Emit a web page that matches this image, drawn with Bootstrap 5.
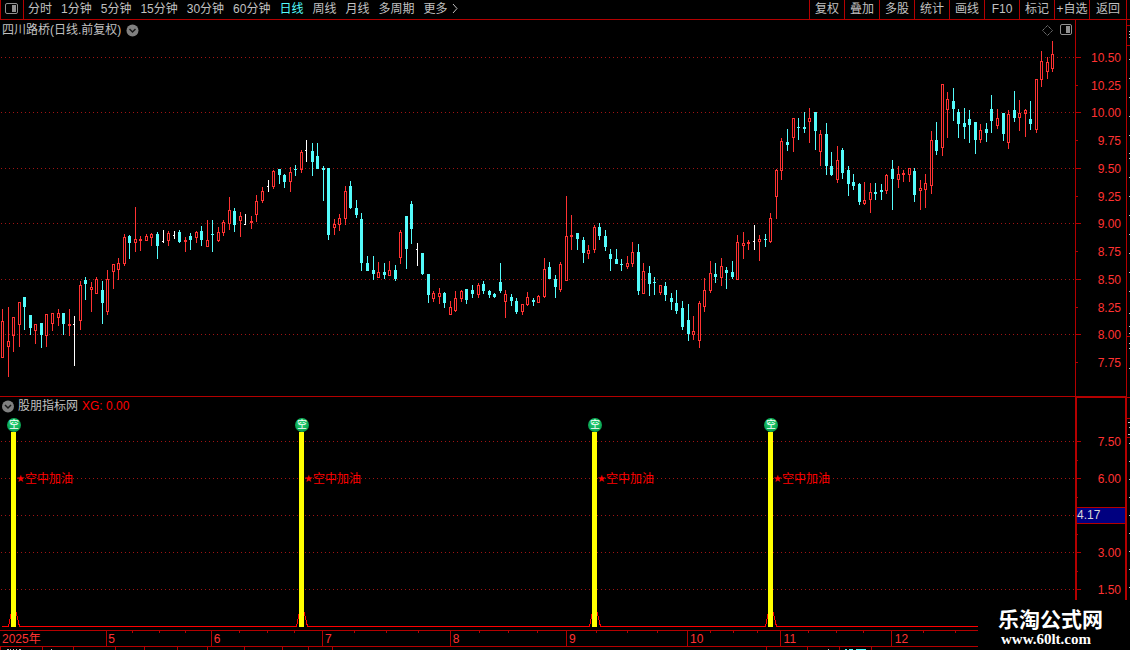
<!DOCTYPE html>
<html lang="zh-CN">
<head>
<meta charset="utf-8">
<meta name="viewport" content="width=device-width, initial-scale=1">
<title>四川路桥 日线</title>
<link href="https://cdn.jsdelivr.net/npm/bootstrap@5.3.0/dist/css/bootstrap.min.css" rel="stylesheet">
<style>
:root{--line:#b40000;--txt:#c0c0c0;--up:#ff3232;--down:#54fcfc}
body{background:#000;color:var(--txt);font:12px/16px "Liberation Sans","Noto Sans CJK SC",sans-serif}
.topbar{flex:0 0 20px;height:20px;border-bottom:1px solid var(--line);white-space:nowrap}
.topbar a,.topbar button{color:var(--txt);font-size:12px;line-height:19px;text-decoration:none}
.topbar a.active{color:var(--down)}
.side-toggle{width:24px;border:solid var(--line);border-width:0 1px;background:none;padding:0}
.periods{gap:9px;padding-left:4px}
.tool{width:35px;border:0;border-left:1px solid var(--line);background:none;padding:0}
.tools{border-right:1px solid var(--line);margin-right:3px}
.tool-last{width:37px}
.panel-price{flex:376 1 0;min-height:0}
.panel-signal{flex:234 1 0;min-height:0}
.plot{min-width:0}
.panel-signal .plot{border-top:1px solid var(--line)}
.fill-svg{position:absolute;inset:0;width:100%;height:100%;shape-rendering:crispEdges}
.caption{padding:2px 3px 0 2px;gap:5px}
.panel-signal .caption{padding-top:1px}
.caption svg,.scale svg,.topbar svg{display:block;flex:none}
.scale{width:52px;border:solid var(--line);border-width:0 1px;color:var(--up)}
.panel-signal .scale{border-width:2px 2px 0}
.scale::before,.scale::after{content:"";flex:24 1 0}
.scale::after{flex-grow:19}
.scale ol{flex:333 1 0;padding:0 5px 0 0}
.scale li{flex:1 1 0;min-height:0;text-align:right}
.panel-signal .scale::before{flex-grow:25}
.panel-signal .scale::after{flex-grow:22}
.panel-signal .scale ol{flex-grow:185;padding:0}
.panel-signal .scale li{padding-right:4px}
.panel-signal .scale li.cursor-value{padding:0}
.cursor-value span{background:#000080;border:solid var(--line);border-width:1px 0;color:#d8d8d8;line-height:15px;text-align:left}
.edge{width:3px}
.xg{color:#f00}
.marker{position:absolute;width:0}
.ball{width:14px;height:14px;margin-left:-7px;border-radius:50%;background:radial-gradient(circle at 50% 40%,#28d878,#08a050 70%,#087038);color:#fff;font-size:10px;line-height:14px}
.signal-name{color:#f00;white-space:nowrap;margin:39px 0 0 2px;line-height:16px}
.signal-name i{font:10px/16px "DejaVu Sans",sans-serif}
.dates{flex:0 0 20px;color:var(--up)}
.dates ol{height:16px}
.dates ol::after{content:"";flex:152 1 0}
.dates li{min-width:0;padding:1px 0 0 2px;line-height:16px}
.sitemark{position:absolute;right:0;bottom:0;width:152px;height:50px;background:#000;color:#fff;padding:6px 0 0 20px}
.sitemark strong{font:bold 21px/24px "Noto Sans CJK SC",sans-serif}
.sitemark a{color:#fff;text-decoration:none;font:bold 15px/18px "Liberation Serif",serif;padding-left:3px}
</style>
</head>
<body class="position-relative d-flex flex-column vh-100 overflow-hidden">

<header class="topbar d-flex">
  <button class="side-toggle" type="button" aria-label="侧栏">
    <svg width="22" height="19" fill="none" stroke="#909090"><rect x="4.500" y="3.500" width="12" height="10" rx="1.500"/><path d="M11 5h4v7h-4z" fill="#909090" stroke="none"/></svg>
  </button>
  <nav class="periods d-flex">
    <a href="#">分时</a><a href="#">1分钟</a><a href="#">5分钟</a><a href="#">15分钟</a><a href="#">30分钟</a><a href="#">60分钟</a><a href="#" class="active" aria-current="page">日线</a><a href="#">周线</a><a href="#">月线</a><a href="#">多周期</a>
    <a href="#" class="d-flex gap-1">更多<svg width="7" height="18" fill="none" stroke="#c0c0c0"><path d="M1 4l4 4.500l-4 4.500"/></svg></a>
  </nav>
  <div class="tools d-flex ms-auto">
    <button class="tool" type="button">复权</button><button class="tool" type="button">叠加</button><button class="tool" type="button">多股</button><button class="tool" type="button">统计</button><button class="tool" type="button">画线</button><button class="tool" type="button">F10</button><button class="tool" type="button">标记</button><button class="tool" type="button">+自选</button><button class="tool tool-last" type="button">返回</button>
  </div>
</header>

<section class="panel-price d-flex">
  <div class="plot position-relative flex-grow-1">
    <svg id="price" class="fill-svg" viewBox="0 20 1075 376" preserveAspectRatio="none"></svg>
    <div class="caption position-relative d-flex align-items-center">
      <span>四川路桥(日线.前复权)</span>
      <svg width="13" height="13"><circle cx="6.500" cy="6.500" r="6" fill="#808080"/><path d="M3.500 5l3 3l3-3" fill="none" stroke="#181818" stroke-width="1.500"/></svg>
      <svg class="ms-auto" width="11" height="11"><path d="M5.500.5l5 5l-5 5l-5-5z" fill="none" stroke="#808080" stroke-dasharray="1.400 .6"/></svg>
      <svg width="14" height="12"><rect x="2.500" y=".5" width="11" height="10" rx="1.500" fill="none" stroke="#909090"/><path d="M8 2h4v7h-4z" fill="#909090"/></svg>
    </div>
  </div>
  <div class="scale position-relative d-flex flex-column">
    <svg class="fill-svg" viewBox="0 20 50 376" preserveAspectRatio="none"><path stroke="#b40000" d="M0 57.500h5M0 112.500h5M0 168.500h5M0 223.500h5M0 279.500h5M0 334.500h5M0 85.500h2M0 140.500h2M0 196.500h2M0 251.500h2M0 307.500h2M0 362.500h2"/></svg>
    <ol class="list-unstyled d-flex flex-column m-0 position-relative">
      <li class="d-flex align-items-center justify-content-end">10.50</li><li class="d-flex align-items-center justify-content-end">10.25</li><li class="d-flex align-items-center justify-content-end">10.00</li><li class="d-flex align-items-center justify-content-end">9.75</li><li class="d-flex align-items-center justify-content-end">9.50</li><li class="d-flex align-items-center justify-content-end">9.25</li><li class="d-flex align-items-center justify-content-end">9.00</li><li class="d-flex align-items-center justify-content-end">8.75</li><li class="d-flex align-items-center justify-content-end">8.50</li><li class="d-flex align-items-center justify-content-end">8.25</li><li class="d-flex align-items-center justify-content-end">8.00</li><li class="d-flex align-items-center justify-content-end">7.75</li>
    </ol>
  </div>
  <div class="edge position-relative"><svg class="fill-svg" viewBox="0 20 3 376" preserveAspectRatio="none"><path stroke="#b40000" d="M0 25.500h3M0 45.500h3M0 336.500h3"/><path stroke="#c0c0c0" d="M2 31.500h1M2 34.500h1M2 37.500h1M2 59.500h1M2 78.500h1M2 97.500h1M2 116.500h1M2 135.500h1M2 153.500h1M2 158.500h1M2 177.500h1M2 196.500h1M2 215.500h1M2 234.500h1M2 253.500h1M2 272.500h1M2 291.500h1M2 313.500h1M2 326.500h1M2 333.500h1M2 343.500h1M2 348.500h1M2 368.500h1"/></svg></div>
</section>

<section class="panel-signal d-flex">
  <div class="plot position-relative flex-grow-1">
    <svg id="signal" class="fill-svg" viewBox="0 397 1075 233" preserveAspectRatio="none"></svg>
    <div class="caption position-relative d-flex align-items-center gap-1">
      <svg width="12" height="13"><circle cx="6" cy="6.500" r="6" fill="#808080"/><path d="M3 5l3 3l3-3" fill="none" stroke="#181818" stroke-width="1.500"/></svg>
      <span>股朋指标网</span><span class="xg">XG: 0.00</span>
    </div>
    <div id="markers"></div>
  </div>
  <div class="scale position-relative d-flex flex-column">
    <svg class="fill-svg" viewBox="0 398 48 232" preserveAspectRatio="none"><path stroke="#b40000" d="M0 441.500h4M0 478.500h4M0 552.500h4M0 589.500h4M0 460.500h1M0 497.500h1M0 534.500h1M0 571.500h1"/></svg>
    <ol class="list-unstyled d-flex flex-column m-0 position-relative">
      <li class="d-flex align-items-center justify-content-end">7.50</li><li class="d-flex align-items-center justify-content-end">6.00</li><li class="cursor-value d-flex align-items-center"><span class="w-100">4.17</span></li><li class="d-flex align-items-center justify-content-end">3.00</li><li class="d-flex align-items-center justify-content-end">1.50</li>
    </ol>
  </div>
  <div class="edge position-relative"><svg class="fill-svg" viewBox="0 396 3 234" preserveAspectRatio="none"><path stroke="#b40000" d="M0 397.500h3M0 418.500h3M0 437.500h3"/><path stroke="#c0c0c0" d="M1 422.500h2M2 427.500h1M1 434.500h2M2 443.500h1M2 461.500h1M2 479.500h1M2 497.500h1M2 515.500h1M2 533.500h1M2 551.500h1M2 569.500h1M2 587.500h1"/></svg></div>
</section>

<footer class="dates position-relative">
  <svg class="fill-svg" viewBox="0 630 1130 20" preserveAspectRatio="none">
    <path stroke="#b40000" d="M0 630.500H1130M0 646.500H1130M106.500 631v15M211.500 631v15M322.500 631v15M450.500 631v15M566.500 631v15M687.500 631v15M780.500 631v15M891.500 631v15M132.500 631v2M159.500 631v2M185.500 631v2M239.500 631v2M267.500 631v2M294.500 631v2M354.500 631v2M386.500 631v2M418.500 631v2M479.500 631v2M508.500 631v2M537.500 631v2M596.500 631v2M627.500 631v2M657.500 631v2M710.500 631v2M733.500 631v2M757.500 631v2M808.500 631v2M836.500 631v2M863.500 631v2M923.500 631v2M955.500 631v2M.5 647v3M42.500 647v3M73.500 647v3M115.500 647v3M144.500 647v3M177.500 647v3M207.500 647v3M244.500 647v3M282.500 647v3M308.500 647v3M332.500 647v3M766.500 647v3M807.500 647v3M839.500 647v3M871.500 647v3"/>
    <path stroke="#c0c0c0" d="M7 649.500h2M10 649.500h1M13 649.500h1M16 649.500h1M19 649.500h2M51 649.500h1M828 649.500h1"/>
    <path stroke="#54fcfc" d="M845 649.500h2M849 649.500h4M856 649.500h10"/>
  </svg>
  <ol id="months" class="list-unstyled d-flex position-relative m-0"></ol>
</footer>

<aside class="sitemark d-flex flex-column">
  <strong>乐淘公式网</strong><a href="#">www.60lt.com</a>
</aside>

<script src="https://cdn.jsdelivr.net/npm/bootstrap@5.3.0/dist/js/bootstrap.bundle.min.js"></script>
<script>
// Each candle: x high bodyTop bodyBottom low kind (r rising, c falling, w unchanged)
const candles = `2 309 321 358 358 r;8 307 341 347 377 r;13 317 317 336 352 r;19 302 302 325 347 r;24 297 297 307 330 c;30 315 315 328 335 c;35 324 324 331 344 r;41 323 323 335 348 c;46 314 314 336 347 r;52 313 313 324 331 r;58 309 313 318 326 r;63 313 313 324 335 c;69 309 324 326 336 r;74 316 324 325 366 w;80 281 285 321 330 r;85 277 280 284 300 c;91 282 287 290 312 r;96 277 279 294 294 r;102 281 290 303 324 c;107 270 279 312 315 r;
113 264 264 272 289 r;118 258 263 270 280 r;124 234 237 264 266 r;129 235 236 243 259 c;135 207 239 243 252 r;140 236 239 241 251 r;146 234 236 241 241 r;151 233 234 238 246 r;157 232 234 246 259 c;163 230 241 242 243 w;168 231 233 241 246 r;174 231 235 236 239 w;179 230 232 242 243 c;185 237 240 242 252 r;190 233 236 240 250 c;196 231 232 238 243 r;201 226 231 240 246 c;207 220 240 247 247 r;212 220 234 235 252 c;218 227 232 241 242 r;
223 220 222 233 236 r;229 197 210 224 230 r;234 208 211 225 232 c;240 212 216 221 237 r;245 214 224 225 225 w;251 216 221 223 229 r;256 195 201 215 222 r;262 187 191 201 203 r;268 180 186 187 192 w;273 170 171 187 189 r;279 169 169 175 184 c;284 174 175 182 188 c;290 167 172 182 192 r;295 165 169 170 176 c;301 150 152 170 173 r;306 140 150 151 162 w;312 143 151 162 176 c;317 143 156 169 169 c;323 166 168 170 201 c;328 168 168 235 240 c;
334 219 224 228 235 r;339 214 218 225 231 r;345 186 191 219 225 r;350 181 186 208 209 c;356 200 208 215 218 c;361 213 219 263 271 c;367 256 263 271 271 c;373 256 270 274 280 c;378 262 272 278 278 r;384 263 272 275 279 c;389 261 270 276 276 r;395 265 270 279 281 c;400 230 232 258 264 r;406 216 216 249 269 c;411 201 204 229 244 c;417 243 249 250 266 w;422 253 253 274 275 c;428 274 274 295 303 c;433 291 293 299 302 r;439 288 293 297 304 r;
444 292 293 303 308 c;450 301 307 315 315 r;455 291 298 311 312 r;461 290 291 299 302 r;466 289 289 300 304 c;472 285 290 294 298 c;478 283 285 295 298 r;483 281 284 291 294 c;489 290 291 295 298 c;494 293 294 297 298 c;500 263 282 291 293 c;505 290 294 302 318 r;511 294 297 301 306 c;516 298 301 312 314 c;522 304 304 312 315 r;527 292 297 305 306 r;533 298 300 302 306 c;538 295 296 303 303 r;544 258 269 297 298 r;549 262 267 279 279 c;
555 275 279 287 298 c;560 262 264 290 292 r;566 196 236 281 281 r;571 215 235 237 250 r;577 233 233 239 250 c;583 237 240 253 263 c;588 245 250 254 259 r;594 225 227 250 253 r;599 223 227 236 240 c;605 230 236 247 251 c;610 249 254 259 271 c;616 249 259 264 264 c;621 259 264 265 271 c;627 256 263 267 269 r;632 242 252 264 267 r;638 244 252 291 295 c;643 263 271 294 294 r;649 266 273 284 296 c;654 277 282 283 295 c;660 285 285 293 295 r;
665 282 286 295 301 c;671 293 298 302 310 c;676 290 303 311 314 c;682 301 308 327 330 c;688 304 320 334 341 c;693 316 331 335 340 r;699 301 303 341 348 r;704 278 290 307 312 r;710 261 273 291 293 r;715 263 274 277 283 c;721 258 266 278 286 r;726 267 270 273 289 c;732 261 272 277 279 c;737 235 242 280 280 r;743 232 243 246 259 r;748 240 242 244 250 r;754 225 241 242 250 w;759 235 239 242 261 r;765 234 239 240 247 c;770 213 218 242 243 r;
776 169 170 197 219 r;781 138 141 171 180 r;787 129 142 145 151 c;793 118 118 138 152 r;798 118 127 128 140 c;804 112 127 129 133 c;809 108 118 122 143 r;815 112 112 131 150 c;820 130 134 152 166 r;826 123 134 166 175 c;831 152 166 175 176 c;837 146 160 180 183 r;842 148 150 173 179 c;848 166 170 184 196 c;853 174 182 186 190 c;859 183 184 202 205 c;864 182 200 204 205 r;870 183 192 200 213 r;875 183 192 194 200 c;881 184 190 192 200 c;
886 174 175 191 194 r;892 160 169 179 210 c;898 166 174 180 188 r;903 170 173 175 182 r;909 168 168 175 182 r;914 168 171 195 202 c;920 180 188 191 210 r;925 174 183 190 208 r;931 131 140 186 194 r;936 122 140 151 155 c;942 84 84 148 156 r;947 92 99 110 138 r;953 88 101 109 121 c;958 109 112 124 138 c;964 108 123 127 139 c;969 110 119 125 143 c;975 122 122 140 154 c;980 124 130 140 143 r;986 123 129 133 142 c;991 95 109 121 133 c;
997 109 118 126 129 r;1003 113 113 134 141 c;1008 110 114 143 149 r;1014 91 110 118 122 c;1019 100 113 118 131 r;1025 109 110 114 137 r;1030 101 119 124 130 c;1036 79 79 130 133 r;1041 51 61 80 87 r;1047 57 62 72 79 r;1052 41 54 69 72 r`
  .split(';').map(s => s.trim().split(' '));

const grid = (ys) => `<path stroke="#a01414" stroke-dasharray="1 3" d="${ys.map(y => `M1 ${y + 0.5}H1075`).join('')}"/>`;
let up = '', wick = '', down = '', flat = '';
for (const [sx, sh, st, sb, sl, kind] of candles) {
  const [x, h, t, b, l] = [sx, sh, st, sb, sl].map(Number);
  if (kind === 'r') {
    wick += `M${x} ${h}h1V${t}h-1zM${x} ${b}h1V${l}h-1z`;
    up += `M${x - 0.5} ${t + 0.5}h2v${b - t - 1}h-2z`;
  } else if (kind === 'c') {
    down += `M${x} ${h}h1V${l}h-1zM${x - 1} ${t}h3V${b}h-3z`;
  } else {
    flat += `M${x} ${h}h1V${l}h-1zM${x - 1} ${t}h1v1h-1z`;
  }
}
document.getElementById('price').innerHTML = grid([57, 112, 168, 223, 279, 334]) +
  `<path fill="#ff3232" d="${wick}"/><path fill="none" stroke="#ff3232" d="${up}"/>` +
  `<path fill="#54fcfc" d="${down}"/><path fill="#fff" d="${flat}"/>`;

const signals = [13, 301, 594, 770];
document.getElementById('signal').innerHTML = grid([441, 478, 515, 552, 589]) +
  `<path fill="none" stroke="#f00" d="M2 626.5${signals.map(x => `H${x - 5}.5L${x - 1}.5 606H${x + 1}.5L${x + 6}.5 626.5`).join('')}H1075"/>` +
  signals.map(x => `<rect x="${x - 2}" y="432" width="5" height="195" fill="#ff0"/>`).join('');
document.getElementById('markers').innerHTML = signals.map(x =>
  `<div class="marker" style="left:${(x + 1) / 1075 * 100}%;top:${21 / 233 * 100}%"><div class="ball d-flex justify-content-center">空</div><div class="signal-name d-flex"><i>★</i>空中加油</div></div>`).join('');

const months = [['2025年', 0], ['5', 106], ['6', 211], ['7', 322], ['8', 450], ['9', 566], ['10', 687], ['11', 780], ['12', 891]];
document.getElementById('months').innerHTML = months.map(([name, x], i) =>
  `<li style="flex:${(months[i + 1] ? months[i + 1][1] : 978) - x} 1 0">${name}</li>`).join('');
</script>
</body>
</html>
